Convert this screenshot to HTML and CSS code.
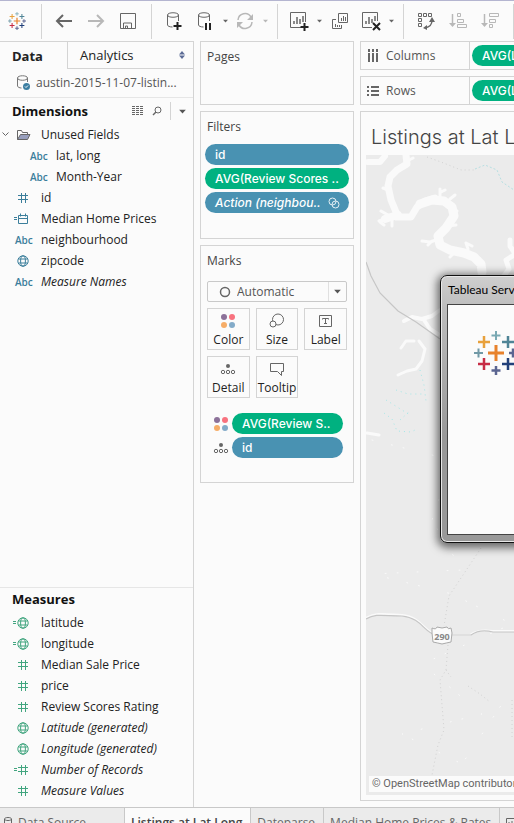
FILE: index.html
```html
<!DOCTYPE html>
<html lang="en">
<head>
<meta charset="utf-8">
<title>Listings at Lat Long</title>
<link rel="stylesheet" href="styles.css">
</head>
<body>
<svg class="defs" aria-hidden="true">
  <symbol id="hash" viewBox="0 0 12 12"><path d="M1 3.500h10M1 7.500h10M4.500 1v10M8.500 1v10" fill="none" stroke="currentColor"/></symbol>
  <symbol id="globe" viewBox="0 0 12 12"><g fill="none" stroke="currentColor"><circle cx="6" cy="6" r="5.200"/><ellipse cx="6" cy="6" rx="2.400" ry="5.200"/><path d="M1.500 4h9M1.500 8h9"/></g></symbol>
  <symbol id="calc-hash" viewBox="0 0 16 12"><path d="M5 3.500h10M5 7.500h10M8.500 1v10M12.500 1v10M1 4.500h3M1 6.500h3" fill="none" stroke="currentColor"/></symbol>
  <symbol id="calc-globe" viewBox="0 0 16 12"><g fill="none" stroke="currentColor"><circle cx="10" cy="6" r="5.200"/><ellipse cx="10" cy="6" rx="2.400" ry="5.200"/><path d="M5.500 4h9M5.500 8h9M0 4.500h3M0 6.500h3"/></g></symbol>
  <symbol id="calc-date" viewBox="0 0 16 12"><path d="M5.500 2.500h9v8h-9zM5.500 5.500h9M7.500 .5v3M12.500 .5v3M1 4.500h3M1 6.500h3" fill="none" stroke="currentColor"/></symbol>
  <symbol id="dots4" viewBox="0 0 16 16"><circle cx="4" cy="4" r="3" fill="#8c7199"/><circle cx="12" cy="4" r="3" fill="#f8727f"/><circle cx="4" cy="12" r="3" fill="#f6ad68"/><circle cx="12" cy="12" r="3" fill="#83abc9"/></symbol>
  <symbol id="detail" viewBox="0 0 16 16"><circle cx="8" cy="5" r="2" fill="#666"/><g fill="none" stroke="#666"><circle cx="3" cy="11" r="1.700"/><circle cx="8" cy="11" r="1.700"/><circle cx="13" cy="11" r="1.700"/></g></symbol>
  <symbol id="caret" viewBox="0 0 8 6"><path d="M0 1h8L4 5.500z" fill="currentColor"/></symbol>
  <symbol id="logo" viewBox="0 0 44 44"><g fill="none" stroke-width="2.500"><path stroke="#e8822c" stroke-width="3" d="M22 14v16M14 22h16"/><path stroke="#e8a13c" d="M10 5v12M4 11h12"/><path stroke="#4f8496" d="M34 5v12M28 11h12"/><path stroke="#c72c45" d="M10 27v12M4 33h12"/><path stroke="#22407a" d="M34 27v12M28 33h12"/><path stroke="#7aa9b3" stroke-width="2" d="M22 0v9M17.500 4.500h9"/><path stroke="#5b6591" d="M22 35v9M17.500 39.500h9M39 17.500v9M35 22h9"/><path stroke="#7199a6" stroke-width="2" d="M4.500 17.500v9M0 22h9"/></g></symbol>
</svg>

<header class="toolbar">
  <button class="tool home" aria-label="Start page"><svg width="18" height="18"><use href="#logo"/></svg></button>
  <span class="sep"></span>
  <button class="tool" aria-label="Undo"><svg width="18" height="18"><path d="M17 9H2M8 3L2 9l6 6" fill="none" stroke="#666" stroke-width="2"/></svg></button>
  <button class="tool" aria-label="Redo"><svg width="18" height="18"><path d="M1 9h15M10 3l6 6-6 6" fill="none" stroke="#b8b8b8" stroke-width="2"/></svg></button>
  <button class="tool" aria-label="Save"><svg width="18" height="18"><path d="M1.500 1.500h15v15h-15zM4.500 16v-5h8v5M6.500 16v-2h2v2" fill="none" stroke="#666"/></svg></button>
  <span class="sep"></span>
  <button class="tool" aria-label="New data source"><svg width="16" height="20"><path d="M1.500 4v10c0 1 2 2 5 2M12.500 4v6M1.500 4c0-3 11-3 11 0s-11 3-11 0z" fill="none" stroke="#666"/><path d="M11.500 11v8M7.500 15h8" stroke="#222" stroke-width="2"/></svg></button>
  <button class="tool split" aria-label="Pause updates"><svg width="16" height="20"><path d="M1.500 4v10c0 1 2 2 5 2M12.500 4v6M1.500 4c0-3 11-3 11 0s-11 3-11 0z" fill="none" stroke="#666"/><path d="M9 12v7M13 12v7" stroke="#222" stroke-width="2"/></svg></button>
  <button class="tool caret" aria-label="Update options"><svg width="5" height="4"><use href="#caret"/></svg></button>
  <button class="tool split" aria-label="Refresh"><svg width="18" height="18"><g fill="none" stroke="#b8b8b8" stroke-width="1.500"><path d="M2 8a7 7 0 0 1 13-3M16 10a7 7 0 0 1-13 3"/></g><path d="M17 2v6h-6zM1 16v-6h6z" fill="#b8b8b8"/></svg></button>
  <button class="tool caret off" aria-label="Refresh options"><svg width="5" height="4"><use href="#caret"/></svg></button>
  <span class="sep"></span>
  <button class="tool split" aria-label="New worksheet"><svg width="20" height="20"><path d="M13 16.500H1.500v-15h15V11" fill="none" stroke="#666"/><path d="M5 13v-3M8 13V6M11 13V8M14 11V5" stroke="#666" stroke-width="1.500"/><path d="M15.500 12v8M11.500 16h8" stroke="#222" stroke-width="2"/></svg></button>
  <button class="tool caret" aria-label="New sheet options"><svg width="5" height="4"><use href="#caret"/></svg></button>
  <button class="tool" aria-label="Duplicate"><svg width="18" height="18"><path d="M7.500 1.500h9v9h-9zM5 7.500H1.500v9h9V13M10.500 9V6M12.500 9V4M14.500 9V5M4.500 15v-3M6.500 15v-2M8.500 15v-2" fill="none" stroke="#666"/></svg></button>
  <button class="tool split" aria-label="Clear sheet"><svg width="20" height="20"><path d="M11 16.500H1.500v-15h15V10" fill="none" stroke="#666"/><path d="M5 13v-3M8 13V6M11 12V8M14 10V5" stroke="#666" stroke-width="1.500"/><path d="M12 12l7 7M19 12l-7 7" stroke="#222" stroke-width="2"/></svg></button>
  <button class="tool caret" aria-label="Clear options"><svg width="5" height="4"><use href="#caret"/></svg></button>
  <span class="sep"></span>
  <button class="tool" aria-label="Swap rows and columns"><svg width="18" height="18"><g fill="none" stroke="#666"><path d="M1.500 1.500h3v3h-3zM6.500 1.500h3v3h-3zM11.500 1.500h3v3h-3zM1.500 6.500h3v3h-3zM1.500 11.500h3v3h-3z"/><path d="M15 8c0 5-2 7-7 8" stroke-width="1.500"/></g><path d="M15 5l3 5h-6zM6 16l4-3v5z" fill="#666"/></svg></button>
  <button class="tool" aria-label="Sort ascending"><svg width="18" height="18"><g fill="none" stroke="#b8b8b8"><path d="M3.500 2v11" stroke-width="1.500"/><path d="M8.500 1.500h3v3h-3zM8.500 7.500h6v3h-6zM8.500 12.500h9v3h-9z"/></g><path d="M0 11h7l-3.500 4z" fill="#b8b8b8"/></svg></button>
  <button class="tool" aria-label="Sort descending"><svg width="18" height="18"><g fill="none" stroke="#b8b8b8"><path d="M3.500 2v11" stroke-width="1.500"/><path d="M8.500 1.500h9v3h-9zM8.500 7.500h6v3h-6zM8.500 12.500h3v3h-3z"/></g><path d="M0 11h7l-3.500 4z" fill="#b8b8b8"/></svg></button>
  <span class="sep"></span>
</header>

<main class="workspace">
  <aside class="data-pane">
    <div class="pane-tabs">
      <button class="pane-tab current">Data</button>
      <button class="pane-tab">Analytics<svg width="6" height="8"><path d="M0 3.500L3 0l3 3.500zM0 4.500h6L3 8z" fill="#5b6b96"/></svg></button>
    </div>
    <div class="source"><svg width="16" height="18"><path d="M1.500 4v8c0 1 2 2 4 2M11.500 4v4M1.500 4c0-3 10-3 10 0s-10 3-10 0z" fill="none" stroke="#777"/><circle cx="10.500" cy="12.500" r="3.500" fill="#3b7ea1"/><path d="M9 12.500l1 1 2-2" fill="none" stroke="#fff"/></svg><span>austin-2015-11-07-listin...</span></div>
    <section class="dimensions">
      <div class="pane-head">
        <h2>Dimensions</h2>
        <button aria-label="View data"><svg width="12" height="10"><path d="M0 .5h12M0 2.500h12M0 4.500h12M0 6.500h12M0 8.500h12" stroke="#666" stroke-dasharray="3 1"/></svg></button>
        <button aria-label="Find field"><svg width="10" height="10"><circle cx="6" cy="4" r="3" fill="none" stroke="#666"/><path d="M4 6L1 9" stroke="#666" stroke-width="1.500"/></svg></button>
        <button class="menu" aria-label="Pane menu"><svg width="7" height="5"><use href="#caret"/></svg></button>
      </div>
      <ul class="fields blue">
        <li class="folder"><svg class="chev" width="7" height="5"><path d="M.5.5l3 3 3-3" fill="none" stroke="#666"/></svg><span class="type"><svg width="15" height="12"><path d="M1.500 10.500v-9h4l1 2h5v2" fill="none" stroke="#666"/><path d="M1.500 10.500l3-5h9.500l-2.500 5z" fill="#989fbd" stroke="#666"/></svg></span>Unused Fields</li>
        <li class="nested"><span class="type">Abc</span>lat, long</li>
        <li class="nested"><span class="type">Abc</span>Month-Year</li>
        <li><span class="type"><svg width="12" height="12"><use href="#hash"/></svg></span>id</li>
        <li><span class="type calc"><svg width="16" height="12"><use href="#calc-date"/></svg></span>Median Home Prices</li>
        <li><span class="type">Abc</span>neighbourhood</li>
        <li><span class="type"><svg width="12" height="12"><use href="#globe"/></svg></span>zipcode</li>
        <li class="gen"><span class="type">Abc</span>Measure Names</li>
      </ul>
    </section>
    <section class="measures">
      <h2>Measures</h2>
      <ul class="fields green">
        <li><span class="type calc"><svg width="16" height="12"><use href="#calc-globe"/></svg></span>latitude</li>
        <li><span class="type calc"><svg width="16" height="12"><use href="#calc-globe"/></svg></span>longitude</li>
        <li><span class="type"><svg width="12" height="12"><use href="#hash"/></svg></span>Median Sale Price</li>
        <li><span class="type"><svg width="12" height="12"><use href="#hash"/></svg></span>price</li>
        <li><span class="type"><svg width="12" height="12"><use href="#hash"/></svg></span>Review Scores Rating</li>
        <li class="gen"><span class="type"><svg width="12" height="12"><use href="#globe"/></svg></span>Latitude (generated)</li>
        <li class="gen"><span class="type"><svg width="12" height="12"><use href="#globe"/></svg></span>Longitude (generated)</li>
        <li class="gen"><span class="type calc"><svg width="16" height="12"><use href="#calc-hash"/></svg></span>Number of Records</li>
        <li class="gen"><span class="type"><svg width="12" height="12"><use href="#hash"/></svg></span>Measure Values</li>
      </ul>
    </section>
  </aside>

  <div class="cards">
    <section class="card pages"><h3>Pages</h3></section>
    <section class="card filters">
      <h3>Filters</h3>
      <div class="pills">
        <button class="pill dim">id</button>
        <button class="pill mea">AVG(Review Scores ..</button>
        <button class="pill dim gen">Action (neighbou..<svg width="12" height="12"><g fill="none" stroke="#e4f0f5"><circle cx="4.500" cy="4.500" r="3.500"/><circle cx="7.500" cy="7.500" r="3.500"/></g></svg></button>
      </div>
    </section>
    <section class="card marks">
      <h3><label for="mark-type">Marks</label></h3>
      <div class="mark-type">
        <svg class="ring" width="12" height="12"><circle cx="6" cy="6" r="4.500" fill="none" stroke="#666" stroke-width="1.500"/></svg>
        <select id="mark-type"><option>Automatic</option></select>
        <span class="drop"><svg width="7" height="5"><use href="#caret"/></svg></span>
      </div>
      <div class="mark-grid">
        <button><svg width="16" height="16"><use href="#dots4"/></svg>Color</button>
        <button><svg width="16" height="16"><g fill="#fbfbfb" stroke="#666"><circle cx="9" cy="6.500" r="5.500"/><circle cx="4" cy="11" r="3"/></g></svg>Size</button>
        <button><svg width="16" height="16"><path d="M1.500 2.500h12v11h-12zM4.500 6.500v-1h6v1M7.500 5.500v5M6 10.500h3" fill="none" stroke="#666"/></svg>Label</button>
        <button><svg width="16" height="16"><use href="#detail"/></svg>Detail</button>
        <button><svg width="16" height="16"><path d="M1.500 2.500h13v8h-2v4l-4-4h-7z" fill="none" stroke="#666"/></svg>Tooltip</button>
      </div>
      <div class="encodings">
        <div><svg width="16" height="16"><use href="#dots4"/></svg><button class="pill mea">AVG(Review S..</button></div>
        <div><svg width="16" height="16"><use href="#detail"/></svg><button class="pill dim">id</button></div>
      </div>
    </section>
  </div>

  <div class="sheet">
    <div class="shelf">
      <div class="shelf-name"><svg width="12" height="14"><path d="M2 0v3M6 0v3M10 0v3M2 4v9M6 4v9M10 4v9" stroke="#666" stroke-width="2"/></svg>Columns</div>
      <button class="pill mea">AVG(Longitude)</button>
    </div>
    <div class="shelf">
      <div class="shelf-name"><svg width="12" height="12"><path d="M0 2h2M0 6h2M0 10h2M4 2h8M4 6h8M4 10h8" stroke="#666" stroke-width="2"/></svg>Rows</div>
      <button class="pill mea">AVG(Latitude)</button>
    </div>
    <section class="view">
      <h1>Listings at Lat Long</h1>
      <div class="map">
        <svg class="terrain" viewBox="366 155 148 640" preserveAspectRatio="xMinYMin slice">
          <g fill="none" stroke="#fafafa" stroke-linejoin="round" stroke-linecap="round">
            <path stroke-width="7" d="M406 155l1 9-10 6-7 7-2 9 3 14 5 12 1 5M397 217l14 0 6-10 8-6 10-3"/>
            <path stroke-width="9" d="M420 204l12-4 12 1 8 6 2 9-8 12-8 8 2 9 10 5 14 3 10 4 7 7 1 8"/>
            <path stroke-width="8" d="M398 215l-7 2-6 2"/>
            <path stroke-width="6" d="M368 162l12 0 5-6"/>
            <path stroke-width="3" d="M409 160l4-2M388 190l-5-2M388 215l-7-4M380 222l4 3M392 219v7M385 219l-6 2M440 197v-8M450 199l5-4M441 192l4-2M454 213l3-2M436 240l-6 2-8-1M432 241l-4 4M447 226l9-1M468 249l-2-6 6 3M453 254l-3 3"/>
            <path stroke-width="5" d="M510 240v6l4 6M514 255l-8 5 3 9-6 8"/>
            <path stroke-width="4" d="M440 310l-8 6-10 3-10-2-8 4M424 320l6 9 8 5"/>
            <path stroke-width="3" d="M414 341l-8 0-5 7M398 375l9-4 9-2 6-8 3-12-6-8"/>
            <path stroke-width="3" d="M367 433l12 2"/>
            <path stroke-width="1" stroke-dasharray="1 19 1 11 1 29" d="M372 440l80 20-20 60 30 50-90 4 80 20 60 30-90 40 60 50-80 20 60 30 60-90"/>
          </g>
          <g fill="none" stroke="#c6c6c6">
            <path stroke-width="1.200" d="M366 262l5 14 9 17 18 18 18 11 24 17"/>
            <path stroke-width="2" stroke="#fafafa" d="M366 618c10-6 18-4 36-3 20 2 22 17 34 19M452 635h18c7-5 14-5 22-4h22"/>
            <path stroke-width="1.200" d="M366 619c10-6 18-3 36-3 20 2 22 17 34 19h35c7-5 14-5 22-3h21"/>
            <path stroke="#d2d2d2" stroke-dasharray="1 3" d="M427 157l14 5 20 8 14 0M481 548l-10 15-12 18-10 15-5 30M448 645l-2 25-6 10 4 50-6 15-6 30M468 686l12 8 10 8M446 670l5 7M512 700v40"/>
            <path stroke="#b7dfe2" stroke-dasharray="2 2" d="M475 169l10-4 12 5 5 12 12 8"/>
            <path stroke="#a5e8e8" stroke-dasharray="1 4" d="M384 413l8 6 5 12 14 1 6-3M396 390l12 4 14 0M420 370l4 15 2 16M400 420l10-9M386 400l24 15"/>
          </g>
          <path d="M432 628q4 2 5-1 5 2 10 0 1 3 4 1l1 5-1 9q-5 1-9 2-4-1-9-2l-1-9z" fill="#fbfbfb" stroke="#aaa"/>
          <text class="route" x="442" y="640" text-anchor="middle">290</text>
        </svg>
        <a class="credit" href="#">© OpenStreetMap contributors</a>
      </div>
      <div class="dialog" role="dialog" aria-label="Tableau Server">
        <div class="dialog-title">Tableau Server</div>
        <div class="dialog-body"><svg width="44" height="44"><use href="#logo"/></svg></div>
      </div>
    </section>
  </div>
</main>

<nav class="sheet-tabs">
  <button class="source-tab"><svg width="8" height="12"><path d="M.5 2v8c0 2 7 2 7 0V2c0-2-7-2-7 0s7 2 7 0" fill="none" stroke="#666"/></svg>Data Source</button>
  <button class="current">Listings at Lat Long</button>
  <button>Dateparse</button>
  <button>Median Home Prices &amp; Rates</button>
  <button aria-label="New worksheet"><svg width="14" height="14"><path d="M.5 2.500h12v10H.5zM3 6v5M6 5v6M9 7v4" fill="none" stroke="#666"/></svg></button>
</nav>
</body>
</html>
```
FILE: styles.css
```css
* { box-sizing: border-box; }
body {
  margin: 0;
  height: 100vh;
  overflow: hidden;
  background: #fbfbfb;
  color: #222;
  font: 12px/16px "Open Sans", sans-serif;
}
button { font: inherit; color: inherit; background: none; border: 0; padding: 0; margin: 0; }
h1, h2, h3, ul { margin: 0; padding: 0; font-weight: 400; list-style: none; }
svg { flex: none; display: block; }
.defs { position: absolute; width: 0; height: 0; }

.toolbar { display: flex; align-items: center; height: 41px; border-top: 1px solid #b4b5d0; overflow: hidden; }
.tool { flex: none; width: 32px; height: 32px; display: flex; align-items: center; justify-content: center; color: #666; }
.home { width: 34px; }
.split { width: 30px; }
.caret { width: 10px; }
.off { color: #b8b8b8; }
.sep { flex: none; width: 1px; height: 35px; margin: 0 6px 0 7px; background: #d4d4d4; }

.workspace { display: grid; grid-template-columns: 194px 154px minmax(0, 1fr); column-gap: 6px; height: calc(100vh - 57px); }

.data-pane { display: flex; flex-direction: column; border: solid #d4d4d4; border-width: 1px 1px 0 0; }
.pane-tabs { display: flex; height: 27px; font-size: 13px; }
.pane-tab { width: 67px; padding-left: 12px; text-align: left; }
.pane-tab.current { font-weight: 700; }
.pane-tab:not(.current) { flex: 1; display: flex; align-items: center; justify-content: space-between; padding-right: 8px; border: solid #d4d4d4; border-width: 0 0 1px 1px; }
.source { display: flex; align-items: center; gap: 4px; height: 29px; padding-left: 16px; color: #555; border-bottom: 1px solid #e6e6e6; }
.dimensions { flex: 1; }
.pane-head { display: flex; align-items: center; gap: 8px; height: 26px; padding: 0 7px 0 12px; color: #555; }
.pane-head h2 { flex: 1; }
h2 { color: #111; font-size: 13px; font-weight: 700; }
.menu { height: 18px; padding-left: 8px; border-left: 1px solid #d4d4d4; }
.fields li { display: flex; align-items: center; height: 21px; position: relative; padding-left: 12px; white-space: nowrap; }
.type { width: 29px; display: flex; padding-left: 3px; font-size: 10px; font-weight: 600; font-style: normal; }
.type:has(svg) { padding-left: 5px; }
.type.calc { padding-left: 1px; }
.fields .nested { padding-left: 27px; }
.chev { position: absolute; left: 2px; }
.blue .type { color: #3b7e9b; }
.green .type { color: #41a57f; }
.folder .type { padding-left: 4px; }
.gen { font-style: italic; }
.measures { height: 220px; padding: 3px 0 0; border-top: 1px solid #e6e6e6; }
.measures h2 { padding-left: 12px; }
.measures .fields { padding-top: 5px; }

.cards { display: flex; flex-direction: column; gap: 6px; }
.card { border: 1px solid #d4d4d4; padding: 7px 6px; color: #444; }
h3 { font-size: 12px; }
.pages { height: 64px; }
.filters { height: 128px; }
.marks { height: 238px; }
.pills { display: grid; grid-template-columns: minmax(0, 1fr); gap: 3px; padding-top: 9px; margin: 0 -2px; }
.pill { height: 21px; padding: 0 9px 0 10px; display: flex; align-items: center; justify-content: space-between; border-radius: 11px; color: #fff; font-family: Inter, sans-serif; font-weight: 500; white-space: nowrap; }
.pill.dim { background: #4992b2; }
.pill.mea { background: #00b180; }
.mark-type { position: relative; display: flex; height: 21px; margin-top: 12px; border: 1px solid #c9c9c9; border-radius: 2px; }
.mark-type select { flex: 1; appearance: none; border: 0; background: none; padding: 0 0 0 29px; font: inherit; color: #555; }
.ring { position: absolute; left: 11px; top: 4px; }
.drop { width: 18px; display: grid; place-items: center; border-left: 1px solid #e0e0e0; color: #555; pointer-events: none; }
.mark-grid { display: grid; grid-template-columns: repeat(3, 1fr); gap: 6px; margin-top: 6px; color: #222; }
.mark-grid button { height: 42px; display: flex; flex-direction: column; align-items: center; justify-content: flex-end; gap: 3px; padding-bottom: 1px; border: 1px solid #d4d4d4; }
.encodings { display: grid; gap: 3px; padding: 15px 4px 0 6px; }
.encodings div { display: flex; align-items: center; gap: 3px; }
.encodings .pill { flex: 1; }

.sheet { display: flex; flex-direction: column; gap: 6px; min-width: 0; overflow: hidden; padding-bottom: 6px; }
.shelf { flex: none; display: flex; align-items: center; height: 29px; border: 1px solid #d4d4d4; border-right: 0; overflow: hidden; }
.shelf-name { flex: none; align-self: stretch; display: flex; align-items: center; gap: 7px; width: 109px; padding-left: 6px; color: #555; border-right: 1px solid #d4d4d4; }
.shelf .pill { flex: none; margin-left: 2px; width: 144px; }
.view { flex: 1; display: flex; flex-direction: column; position: relative; border: 1px solid #d4d4d4; border-right: 0; padding: 0 0 5px 5px; overflow: hidden; }
h1 { padding: 13px 0 6px 5px; font: 300 20px/24px Inter, sans-serif; color: #444; white-space: nowrap; }
.map { flex: 1; min-height: 0; position: relative; background: #ebebeb; overflow: hidden; }
.terrain { width: 100%; height: 100%; }
.route { font: 700 9px "Open Sans", sans-serif; fill: #888; }
.credit { position: absolute; left: 3px; bottom: 3px; padding: 0 3px; background: #fbfbfb; color: #666; font: 11px/16px Roboto, sans-serif; white-space: nowrap; text-decoration: none; }
.dialog { position: absolute; left: 79px; top: 163px; width: 420px; height: 268px; padding: 0 6px 7px; display: flex; flex-direction: column; border: 1px solid #111; border-radius: 7px; background: linear-gradient(#cfcfcf, #bdbdbd 12%, #999 60%); box-shadow: inset 0 0 0 1px #e8e8e8, 0 2px 9px 3px rgba(0, 0, 0, .55); }
.dialog-title { height: 28px; padding: 5px 1px; color: #000; font: 12px/18px Lato, sans-serif; }
.dialog-body { flex: 1; padding: 26px; background: #fbfbfb; border: 1px solid #444; }

.sheet-tabs { display: flex; height: 30px; border-top: 1px solid #c8c8c8; background: #ebebeb; color: #666; white-space: nowrap; }
.sheet-tabs button { flex: none; display: flex; align-items: center; padding: 0 8px 0 6px; border-right: 1px solid #c8c8c8; }
.sheet-tabs .source-tab { width: 125px; gap: 6px; padding-left: 4px; }
.sheet-tabs .current { background: #fbfbfb; color: #444; font-weight: 600; }
```
